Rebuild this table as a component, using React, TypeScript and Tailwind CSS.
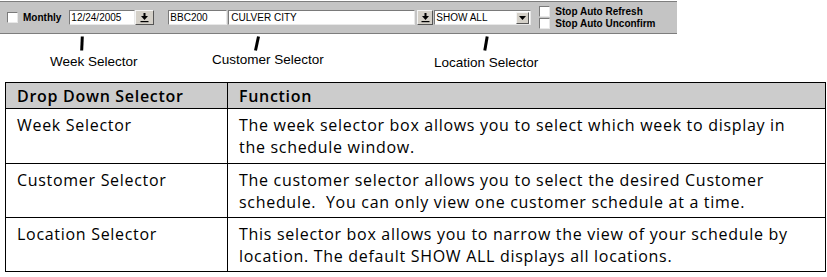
import React from "react"

// raised / sunken bevels like the old win32 controls
const sunken = "border border-t-[#7a7a7a] border-l-[#7a7a7a] border-b-[#e8e8e8] border-r-[#e8e8e8] bg-white"
const raised = "border border-t-[#f4f4f4] border-l-[#f4f4f4] border-b-[#555] border-r-[#555] bg-[#d4d0c8]"

function DownloadArrow() {
  return (
    <svg width="9" height="10" viewBox="0 0 9 10">
      <rect x="3.5" y="0" width="2" height="3" fill="#000" />
      <polygon points="1,3 8,3 4.5,7" fill="#000" />
      <rect x="0.5" y="8" width="8" height="1.2" fill="#000" />
    </svg>
  )
}

function Check() {
  return <div className={`w-[11px] h-[11px] ${sunken}`} />
}

function Mark({ slant }: { slant: number }) {
  return (
    <svg width="8" height="15" viewBox="0 0 8 15">
      <line x1={4 - slant} y1="14.5" x2={4 + slant} y2="0.5" stroke="#000" strokeWidth="3" />
    </svg>
  )
}

const rows = [
  {
    name: "Week Selector",
    text: "The week selector box allows you to select which week to display in the schedule window.",
  },
  {
    name: "Customer Selector",
    text: "The customer selector allows you to select the desired Customer schedule.  You can only view one customer schedule at a time.",
  },
  {
    name: "Location Selector",
    text: "This selector box allows you to narrow the view of your schedule by location. The default SHOW ALL displays all locations.",
  },
]

export default function App() {
  return (
    <div className="w-[827px] h-[277px] bg-white overflow-hidden relative">
      {/* toolbar */}
      <div
        className="mt-[1px] w-[677px] h-[33px] bg-[#c4c4c4] border-t border-b border-t-[#7d7d7d] border-b-[#7d7d7d] flex items-center text-black"
        style={{ fontFamily: "'Liberation Sans', Arial, sans-serif" }}
      >
        <div className="ml-[7px]">
          <Check />
        </div>
        <span className="ml-[5px] text-[10px] font-bold">Monthly</span>
        <div className={`ml-[8px] w-[66px] h-[15px] ${sunken} text-[10px] leading-[13px] pl-[1px]`}>12/24/2005</div>
        <div className={`w-[19px] h-[15px] ${raised} flex items-center justify-center`}>
          <DownloadArrow />
        </div>
        <div className={`ml-[14px] w-[59px] h-[15px] ${sunken} text-[10px] leading-[13px] pl-[1px]`}>BBC200</div>
        <div className={`ml-[1px] w-[187px] h-[15px] ${sunken} text-[10px] leading-[13px] pl-[2px]`}>CULVER CITY</div>
        <div className={`ml-[2px] w-[16px] h-[15px] ${raised} flex items-center justify-center`}>
          <DownloadArrow />
        </div>
        <div className={`ml-[1px] w-[97px] h-[15px] ${sunken} flex items-center justify-between`}>
          <span className="text-[10px] leading-[13px] pl-[1px]">SHOW ALL</span>
          <div className={`w-[13px] h-[12px] mr-[1px] ${raised} flex items-center justify-center`}>
            <svg width="7" height="4" viewBox="0 0 7 4">
              <polygon points="0,0 7,0 3.5,4" fill="#000" />
            </svg>
          </div>
        </div>
        <div className="ml-[8px] flex flex-col gap-[1px]">
          <div className="flex items-center">
            <Check />
            <span className="ml-[5px] text-[10px] font-bold leading-[11px]">Stop Auto Refresh</span>
          </div>
          <div className="flex items-center">
            <Check />
            <span className="ml-[5px] text-[10px] font-bold leading-[11px]">Stop Auto Unconfirm</span>
          </div>
        </div>
      </div>

      {/* annotations */}
      <div
        className="h-[48px] flex text-[13.5px] text-black"
        style={{ fontFamily: "'Liberation Sans', Arial, sans-serif" }}
      >
        <div className="ml-[50px] w-[120px] flex flex-col">
          <div className="ml-[28px] mt-[2px]"><Mark slant={0.3} /></div>
          <div className="mt-[3px] leading-[16px]">Week Selector</div>
        </div>
        <div className="ml-[42px] w-[180px] flex flex-col">
          <div className="ml-[41px] mt-[2px]"><Mark slant={1.5} /></div>
          <div className="mt-[1px] leading-[16px]">Customer Selector</div>
        </div>
        <div className="ml-[42px] w-[140px] flex flex-col">
          <div className="ml-[48px] mt-[2px]"><Mark slant={1.2} /></div>
          <div className="mt-[4px] leading-[16px]">Location Selector</div>
        </div>
      </div>

      {/* table */}
      <table
        className="ml-[5px] w-[821px] border-collapse text-[16px] tracking-[0.7px] text-black"
        style={{ fontFamily: "'Open Sans', sans-serif" }}
      >
        <colgroup>
          <col className="w-[222px]" />
          <col />
        </colgroup>
        <thead>
          <tr className="h-[26px] bg-[#cccccc]">
            <th className="border border-black text-left font-semibold px-[11px] leading-[20px]">Drop Down Selector</th>
            <th className="border border-black text-left font-semibold px-[11px] leading-[20px]">Function</th>
          </tr>
        </thead>
        <tbody>
          {rows.map((r, i) => (
            <tr key={r.name} className={i === 0 ? "h-[55px]" : "h-[54px]"}>
              <td className="border border-black align-top px-[11px] pt-[5px] leading-[22px]">{r.name}</td>
              <td className="border border-black align-top px-[11px] pt-[5px] leading-[22px] whitespace-pre-wrap">{r.text}</td>
            </tr>
          ))}
        </tbody>
      </table>
    </div>
  )
}
